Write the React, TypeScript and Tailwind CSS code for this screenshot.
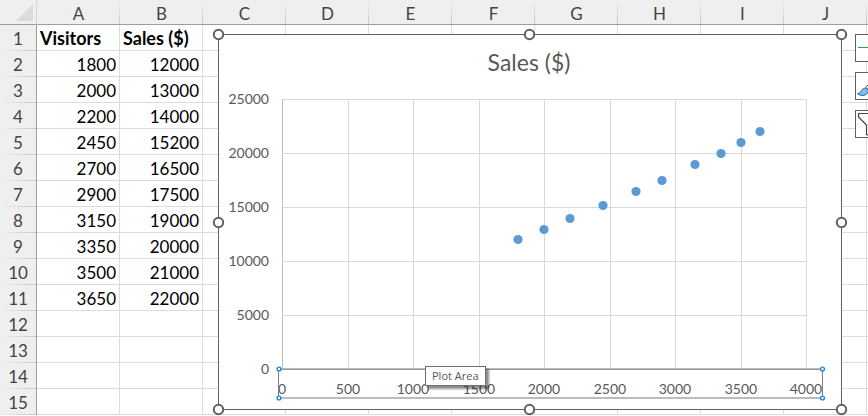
import React from 'react';

interface Point {
  visitors: number;
  sales: number;
}

const DATA: Point[] = [
  { visitors: 1800, sales: 12000 },
  { visitors: 2000, sales: 13000 },
  { visitors: 2200, sales: 14000 },
  { visitors: 2450, sales: 15200 },
  { visitors: 2700, sales: 16500 },
  { visitors: 2900, sales: 17500 },
  { visitors: 3150, sales: 19000 },
  { visitors: 3350, sales: 20000 },
  { visitors: 3500, sales: 21000 },
  { visitors: 3650, sales: 22000 },
];

const COLUMNS = ['A', 'B', 'C', 'D', 'E', 'F', 'G', 'H', 'I', 'J'];
const ROW_COUNT = 15;

const X_TICKS = [0, 500, 1000, 1500, 2000, 2500, 3000, 3500, 4000];
const Y_TICKS = [0, 5000, 10000, 15000, 20000, 25000];

// Plot area inside the 624x376 chart frame
const PLOT = { left: 64, right: 588, top: 65, bottom: 335 };
const xPos = (v: number) => Math.round(PLOT.left + (v / 4000) * (PLOT.right - PLOT.left));
const yPos = (v: number) => Math.round(PLOT.bottom - (v / 25000) * (PLOT.bottom - PLOT.top));

const cellText = (row: number, col: number): string => {
  if (col > 1) return '';
  if (row === 0) return col === 0 ? 'Visitors' : 'Sales ($)';
  const point = DATA[row - 1];
  if (!point) return '';
  return String(col === 0 ? point.visitors : point.sales);
};

const Sheet = () => (
  <table className="w-full table-fixed border-separate border-spacing-0 text-[17px] leading-5">
    <colgroup>
      <col className="w-[37px]" />
      {COLUMNS.map((c) => (
        <col key={c} className="w-[83px]" />
      ))}
      <col />
    </colgroup>
    <thead>
      <tr className="h-[25px] text-[#444444]">
        <td className="border-r border-b border-r-[#d4d4d4] border-b-[#9e9e9e] bg-[#efefef] p-0">
          <svg className="ml-auto mr-[3px] block" width="17" height="17" viewBox="0 0 17 17">
            <path d="M17 0V17H0Z" fill="#dcdcdc" />
          </svg>
        </td>
        {COLUMNS.map((c) => (
          <th
            key={c}
            scope="col"
            className="border-b border-[#9e9e9e] bg-[#efefef] bg-linear-to-t from-[#c8c8c8] to-[#efefef] bg-[length:1px_100%] bg-right bg-no-repeat p-0 pt-[3px] font-normal"
          >
            {c}
          </th>
        ))}
        <td className="border-b border-[#9e9e9e] bg-[#efefef] p-0" />
      </tr>
    </thead>
    <tbody>
      {Array.from({ length: ROW_COUNT }, (_, row) => (
        <tr key={row} className="h-[26px]">
          <th
            scope="row"
            className="border-r border-[#9e9e9e] bg-[#efefef] bg-linear-to-r from-[#efefef] to-[#c8c8c8] bg-[length:100%_1px] bg-bottom bg-no-repeat p-0 pt-px font-normal text-[#444444]"
          >
            {row + 1}
          </th>
          {COLUMNS.map((c, col) => (
            <td
              key={c}
              className={`border-r border-b border-[#dcdcdc] p-0 text-black ${
                row === 0 ? 'pl-[3px] text-left text-[18px] font-bold' : 'pt-[2px] pr-[3px] text-right'
              }`}
            >
              {cellText(row, col)}
            </td>
          ))}
          <td className="border-b border-[#dcdcdc] p-0" />
        </tr>
      ))}
    </tbody>
  </table>
);

const Chart = () => (
  <svg
    className="absolute top-[34px] left-[218px] overflow-visible"
    width="624"
    height="376"
    viewBox="0 0 624 376"
    role="img"
    aria-label="Sales ($)"
  >
    <rect x="0.5" y="0.5" width="623" height="375" fill="#fff" stroke="#606060" />
    <text x="311" y="37" textAnchor="middle" fontSize="23" fill="#595959">
      Sales ($)
    </text>

    <g stroke="#d9d9d9" shapeRendering="crispEdges">
      {X_TICKS.map((v) => (
        <line key={v} x1={xPos(v) + 0.5} x2={xPos(v) + 0.5} y1={PLOT.top} y2={PLOT.bottom} />
      ))}
      {Y_TICKS.map((v) => (
        <line key={v} x1={PLOT.left} x2={PLOT.right} y1={yPos(v) + 0.5} y2={yPos(v) + 0.5} />
      ))}
      <line x1="64.5" x2="64.5" y1={PLOT.top} y2={PLOT.bottom} stroke="#bfbfbf" />
    </g>

    <g fontSize="14" fill="#595959">
      {Y_TICKS.map((v) => (
        <text key={v} x="51" y={yPos(v) + 5} textAnchor="end">
          {v}
        </text>
      ))}
      {X_TICKS.map((v) => (
        <text key={v} x={xPos(v)} y="360" textAnchor="middle">
          {v}
        </text>
      ))}
    </g>

    <g fill="#5b9bd5">
      {DATA.map((p) => (
        <circle key={p.visitors} cx={xPos(p.visitors)} cy={yPos(p.sales) + 0.5} r="4.6" />
      ))}
    </g>

    {/* selected horizontal axis */}
    <g shapeRendering="crispEdges">
      <path d="M61 335.5H604" stroke="#989898" />
      <path d="M61 334.5H604M61 363.5H604M61 364.5H604" stroke="#bcbcbc" />
      <path d="M60.5 335V364M604.5 335V364" stroke="#808080" />
    </g>
    <g fill="#fff" stroke="#1c8ae0" strokeWidth="1.4">
      {[61, 604.5].map((x) =>
        [335, 364].map((y) => <circle key={`${x}-${y}`} cx={x} cy={y} r="1.9" />)
      )}
    </g>

    {/* frame handles */}
    <g fill="#fff" stroke="#606060" strokeWidth="2">
      {[0.5, 311.5, 623.5].map((x) =>
        [0.5, 188.5, 375.5].map((y) =>
          x === 311.5 && y === 188.5 ? null : <circle key={`${x}-${y}`} cx={x} cy={y} r="4.7" />
        )
      )}
    </g>
  </svg>
);

const sideButton = 'block size-7 overflow-hidden border border-[#606060] bg-white';

const ChartButtons = () => (
  <div className="absolute top-[34px] left-[855px] flex flex-col gap-[10px]">
    <button type="button" aria-label="Chart Elements" className={sideButton}>
      <svg width="26" height="26" viewBox="0 0 26 26" fill="none" stroke="#2f9e4f">
        <path d="M2 12.5H12.5V3.5H15.5V12.5H25" />
      </svg>
    </button>
    <button type="button" aria-label="Chart Styles" className={sideButton}>
      <svg width="26" height="26" viewBox="0 0 26 26">
        <path d="M9.5 14.5L21 3L24 5L13 17Z" fill="#fff" stroke="#444" />
        <path
          d="M1.5 20.5C4 20.5 4.5 19.5 5.5 17.5C7 15 10 14.5 12 16.5C13 19 11 21.5 8 22.3C5.5 22.8 3 22 1.5 20.5Z"
          fill="#83bdec"
          stroke="#1769b5"
        />
      </svg>
    </button>
    <button type="button" aria-label="Chart Filters" className={sideButton}>
      <svg width="26" height="26" viewBox="0 0 26 26" fill="#fafafa" stroke="#444" strokeWidth="1.2">
        <path d="M2.5 2.5H23.5V6L15.5 14V25.5L10.5 23.5V14L2.5 6Z" />
      </svg>
    </button>
  </div>
);

export default function App() {
  return (
    <main className="relative h-screen w-full overflow-hidden bg-white font-['Lato',sans-serif]">
      <Sheet />
      <Chart />
      <div
        role="tooltip"
        className="absolute top-[366px] left-[425px] border border-[#707070] bg-white px-[6px] font-['Open_Sans',sans-serif] text-[11px] leading-[18px] text-[#575757] shadow-[3px_3px_2px_rgba(0,0,0,0.45)]"
      >
        Plot Area
      </div>
      <ChartButtons />
    </main>
  );
}
